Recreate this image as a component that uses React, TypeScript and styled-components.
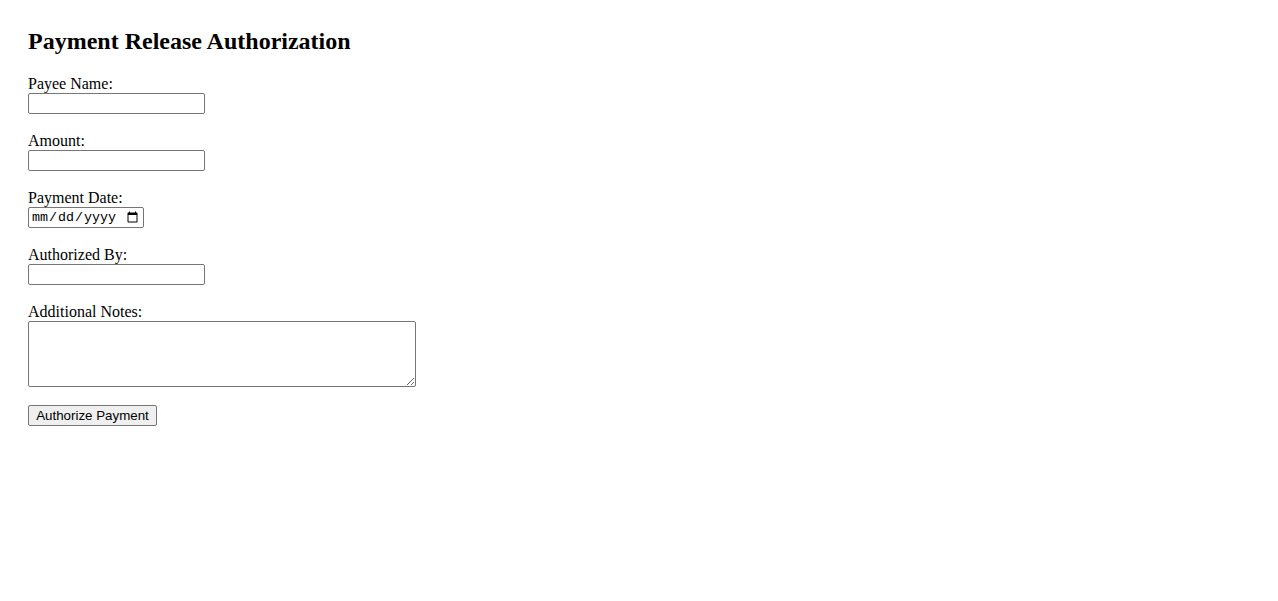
import React from 'react'
import styled, { createGlobalStyle } from 'styled-components'

const GlobalStyle = createGlobalStyle`
  html, body {
    margin: 0;
    padding: 0;
    background: #fff;
  }
`

export default function App() {
  return (
    <>
      <GlobalStyle />
      <Page>
        <Title>Payment Release Authorization</Title>
        <Form onSubmit={(e) => e.preventDefault()}>
          <Field>
            <Label htmlFor="payee">Payee Name:</Label>
            <TextInput id="payee" type="text" />
          </Field>
          <Field>
            <Label htmlFor="amount">Amount:</Label>
            <TextInput id="amount" type="text" />
          </Field>
          <Field>
            <Label htmlFor="date">Payment Date:</Label>
            <DateInput id="date" type="date" />
          </Field>
          <Field>
            <Label htmlFor="auth">Authorized By:</Label>
            <TextInput id="auth" type="text" />
          </Field>
          <Field>
            <Label htmlFor="notes">Additional Notes:</Label>
            <Notes id="notes" />
          </Field>
          <Button type="submit">Authorize Payment</Button>
        </Form>
      </Page>
    </>
  )
}

const Page = styled.div`
  padding: 28px;
  font-family: 'Liberation Serif', 'Times New Roman', serif;
  color: #000;
`

const Title = styled.h2`
  margin: 0 0 20px;
  font-size: 24px;
  font-weight: bold;
  line-height: 27px;
`

const Form = styled.form`
  display: flex;
  flex-direction: column;
  align-items: flex-start;
`

const Field = styled.div`
  display: flex;
  flex-direction: column;
  align-items: flex-start;
  margin-bottom: 18px;
`

const Label = styled.label`
  font-size: 16px;
  line-height: 18px;
  height: 18px;
`

const baseInput = `
  box-sizing: border-box;
  margin: 0;
  border: 1px solid #767676;
  border-radius: 2px;
  background: #fff;
  font-size: 13.33px;
`

const TextInput = styled.input`
  ${baseInput}
  width: 177px;
  height: 21px;
  padding: 1px 2px;
  font-family: 'Liberation Sans', Arial, sans-serif;
`

const DateInput = styled.input`
  ${baseInput}
  width: 116px;
  height: 21px;
  padding: 1px 2px;
  font-family: 'Liberation Mono', monospace;
`

const Notes = styled.textarea`
  ${baseInput}
  width: 388px;
  height: 66px;
  padding: 2px;
  font-family: 'Liberation Mono', monospace;
`

const Button = styled.button`
  box-sizing: border-box;
  margin: 0;
  width: 129px;
  height: 21px;
  padding: 1px 6px;
  border: 1px solid #767676;
  border-radius: 2px;
  background: #efefef;
  color: #000;
  font-family: 'Liberation Sans', Arial, sans-serif;
  font-size: 13.33px;
`
